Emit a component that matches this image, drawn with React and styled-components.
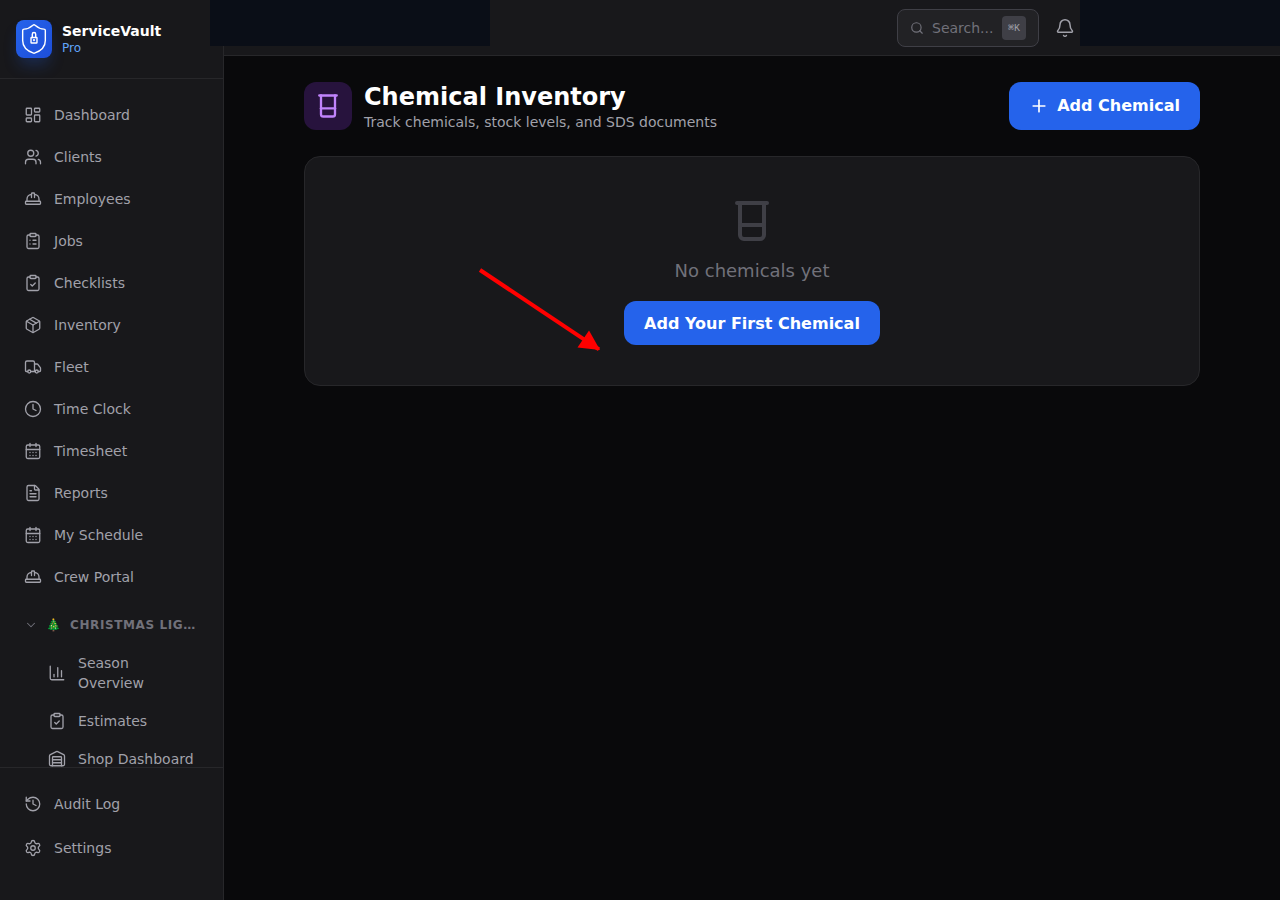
import React from 'react'
import styled, { createGlobalStyle } from 'styled-components'
import {
  LayoutDashboard, Users, HardHat, ClipboardList, ClipboardCheck, Package, Truck, Clock,
  CalendarDays, FileText, ChevronDown, ChartColumn, Warehouse, History, Settings, Search,
  Bell, Plus, Beaker,
} from 'lucide-react'

const GlobalStyle = createGlobalStyle`
  html, body { margin: 0; padding: 0; height: 100%; background: #09090b; }
  body { font-family: "DejaVu Sans", sans-serif; }
  * { box-sizing: border-box; }
`

const Page = styled.div`
  position: relative;
  display: flex;
  width: 1280px;
  height: 900px;
  overflow: hidden;
  background: #09090b;
`

const Sidebar = styled.aside`
  display: flex;
  flex-direction: column;
  flex: 0 0 224px;
  width: 224px;
  min-width: 0;
  height: 900px;
  overflow: hidden;
  background: #18181b;
  border-right: 1px solid #27272a;
`

const Brand = styled.div`
  display: flex;
  flex: 0 0 79px;
  align-items: center;
  gap: 10px;
  padding: 0 16px;
  border-bottom: 1px solid #27272a;
`

const LogoBox = styled.div`
  display: flex;
  align-items: center;
  justify-content: center;
  width: 36px;
  height: 38px;
  border-radius: 8px;
  color: #fff;
  background: linear-gradient(135deg, #2563eb, #1d4ed8);
  box-shadow: 0 10px 15px -3px rgba(37, 99, 235, 0.25);
`

const BrandName = styled.div`
  font-size: 14px;
  font-weight: 700;
  line-height: 18px;
  color: #fff;
`

const BrandPlan = styled.div`
  font-size: 12px;
  line-height: 16px;
  color: #60a5fa;
`

const Nav = styled.nav`
  flex: 1;
  min-height: 0;
  overflow: hidden;
  padding: 15px 12px 0;
`

const NavItem = styled.a`
  display: flex;
  align-items: center;
  gap: 12px;
  height: 42px;
  padding: 0 12px;
  font-size: 14px;
  color: #a1a1aa;
  svg { flex: 0 0 18px; }
`

const GroupHeader = styled.div`
  display: flex;
  align-items: center;
  height: 20px;
  margin: 17px 0 9px;
  padding-left: 12px;
  color: #71717a;
`

const GroupEmoji = styled.span`
  margin: 0 9px 0 8px;
  font-size: 12px;
`

const GroupLabel = styled.span`
  flex: 1;
  min-width: 0;
  padding-right: 15px;
  overflow: hidden;
  white-space: nowrap;
  text-overflow: ellipsis;
  font-size: 12px;
  font-weight: 700;
  letter-spacing: 0.6px;
`

const SubItem = styled.a`
  display: flex;
  align-items: center;
  gap: 12px;
  padding: 9px 13px 9px 36px;
  font-size: 14px;
  line-height: 20px;
  color: #a1a1aa;
  svg { flex: 0 0 18px; }
`

const SidebarFooter = styled.div`
  flex: 0 0 133px;
  padding: 15px 12px 0;
  border-top: 1px solid #27272a;
  display: flex;
  flex-direction: column;
  gap: 2px;
`

const Main = styled.div`
  flex: 1;
  min-width: 0;
  display: flex;
  flex-direction: column;
`

const Topbar = styled.header`
  display: flex;
  align-items: center;
  justify-content: flex-end;
  gap: 16px;
  height: 56px;
  padding: 0 205px 0 0;
  background: #18181b;
  border-bottom: 1px solid #27272a;
`

const SearchBox = styled.div`
  display: flex;
  align-items: center;
  gap: 8px;
  width: 142px;
  height: 38px;
  padding: 0 12px;
  font-size: 14px;
  color: #71717a;
  background: #222225;
  border: 1px solid #3f3f46;
  border-radius: 8px;
  svg { flex: 0 0 14px; }
`

const Kbd = styled.kbd`
  display: flex;
  align-items: center;
  justify-content: center;
  flex: 0 0 24px;
  height: 24px;
  margin-left: auto;
  font-family: "Liberation Mono", monospace;
  font-size: 10px;
  color: #a1a1aa;
  background: #3f3f46;
  border-radius: 4px;
`

const BellButton = styled.div`
  display: flex;
  color: #a1a1aa;
`

const Content = styled.main`
  padding: 26px 80px;
`

const PageHeader = styled.div`
  display: flex;
  align-items: center;
  justify-content: space-between;
  margin-bottom: 26px;
`

const TitleGroup = styled.div`
  display: flex;
  align-items: center;
  gap: 12px;
`

const TitleIcon = styled.div`
  display: flex;
  align-items: center;
  justify-content: center;
  width: 48px;
  height: 48px;
  border-radius: 12px;
  color: #c084fc;
  background: #27133d;
`

const Title = styled.h1`
  margin: 0;
  font-size: 24px;
  line-height: 30px;
  font-weight: 700;
  color: #fff;
`

const Subtitle = styled.p`
  margin: 2px 0 0;
  font-size: 14px;
  line-height: 16px;
  color: #a1a1aa;
`

const PrimaryButton = styled.button`
  display: flex;
  align-items: center;
  gap: 8px;
  height: ${(p) => p.$height}px;
  padding: 0 20px;
  font-family: inherit;
  font-size: 16px;
  line-height: ${(p) => p.$lineHeight};
  font-weight: 700;
  color: #fff;
  background: #2563eb;
  border: none;
  border-radius: 12px;
`

const EmptyCard = styled.section`
  display: flex;
  flex-direction: column;
  align-items: center;
  height: 230px;
  padding-top: 40px;
  background: #18181b;
  border: 1px solid #27272a;
  border-radius: 16px;
`

const EmptyIcon = styled.div`
  display: flex;
  color: #3f3f46;
`

const EmptyText = styled.p`
  margin: 12px 0 16px;
  font-size: 18px;
  line-height: 28px;
  color: #71717a;
`

const Redaction = styled.div`
  position: absolute;
  top: 0;
  left: ${(p) => p.$left}px;
  width: ${(p) => p.$width}px;
  height: 46px;
  background: #0a0e17;
`

const Arrow = styled.svg`
  position: absolute;
  left: 470px;
  top: 260px;
`

const NAV_STROKE = 1.75

const navItems = [
  ['Dashboard', LayoutDashboard],
  ['Clients', Users],
  ['Employees', HardHat],
  ['Jobs', ClipboardList],
  ['Checklists', ClipboardCheck],
  ['Inventory', Package],
  ['Fleet', Truck],
  ['Time Clock', Clock],
  ['Timesheet', CalendarDays],
  ['Reports', FileText],
  ['My Schedule', CalendarDays],
  ['Crew Portal', HardHat],
]

const subItems = [
  ['Season Overview', ChartColumn],
  ['Estimates', ClipboardCheck],
  ['Shop Dashboard', Warehouse],
]

function ShieldLogo() {
  return (
    <svg width="34" height="34" viewBox="0 0 24 24" fill="none" stroke="currentColor" strokeWidth="1" strokeLinecap="round" strokeLinejoin="round">
      <path d="M20 13c0 5-3.5 7.5-7.66 8.95a1 1 0 0 1-.67-.01C7.5 20.5 4 18 4 13V6a1 1 0 0 1 1-1c2 0 4.5-1.2 6.24-2.72a1.17 1.17 0 0 1 1.52 0C14.51 3.81 17 5 19 5a1 1 0 0 1 1 1z" />
      <rect x="9.9" y="10.9" width="4.2" height="3.9" rx="0.4" />
      <path d="M10.8 10.9V8.6a1.2 1.2 0 0 1 2.4 0v2.3" />
      <circle cx="12" cy="12.8" r="0.3" />
    </svg>
  )
}

export default function App() {
  return (
    <Page>
      <GlobalStyle />
      <Sidebar>
        <Brand>
          <LogoBox><ShieldLogo /></LogoBox>
          <div>
            <BrandName>ServiceVault</BrandName>
            <BrandPlan>Pro</BrandPlan>
          </div>
        </Brand>
        <Nav>
          {navItems.map(([label, Icon]) => (
            <NavItem key={label}><Icon size={18} strokeWidth={NAV_STROKE} />{label}</NavItem>
          ))}
          <GroupHeader>
            <ChevronDown size={14} strokeWidth={NAV_STROKE} />
            <GroupEmoji>🎄</GroupEmoji>
            <GroupLabel>CHRISTMAS LIGHTS</GroupLabel>
          </GroupHeader>
          {subItems.map(([label, Icon]) => (
            <SubItem key={label}><Icon size={18} strokeWidth={NAV_STROKE} /><span>{label}</span></SubItem>
          ))}
        </Nav>
        <SidebarFooter>
          <NavItem><History size={18} strokeWidth={NAV_STROKE} />Audit Log</NavItem>
          <NavItem><Settings size={18} strokeWidth={NAV_STROKE} />Settings</NavItem>
        </SidebarFooter>
      </Sidebar>
      <Main>
        <Topbar>
          <SearchBox>
            <Search size={14} />
            <span>Search...</span>
            <Kbd>⌘K</Kbd>
          </SearchBox>
          <BellButton><Bell size={20} strokeWidth={NAV_STROKE} /></BellButton>
        </Topbar>
        <Content>
          <PageHeader>
            <TitleGroup>
              <TitleIcon><Beaker size={28} /></TitleIcon>
              <div>
                <Title>Chemical Inventory</Title>
                <Subtitle>Track chemicals, stock levels, and SDS documents</Subtitle>
              </div>
            </TitleGroup>
            <PrimaryButton $height={48} $lineHeight="24px"><Plus size={20} />Add Chemical</PrimaryButton>
          </PageHeader>
          <EmptyCard>
            <EmptyIcon><Beaker size={48} /></EmptyIcon>
            <EmptyText>No chemicals yet</EmptyText>
            <PrimaryButton $height={44} $lineHeight="normal">Add Your First Chemical</PrimaryButton>
          </EmptyCard>
        </Content>
      </Main>
      <Redaction $left={210} $width={280} />
      <Redaction $left={1080} $width={200} />
      <Arrow width="140" height="100" viewBox="0 0 140 100">
        <line x1="10" y1="10" x2="129" y2="89.3" stroke="#ff0000" strokeWidth="4" />
        <polygon points="130,90 107.5,87.5 119,70.5" fill="#ff0000" />
      </Arrow>
    </Page>
  )
}
